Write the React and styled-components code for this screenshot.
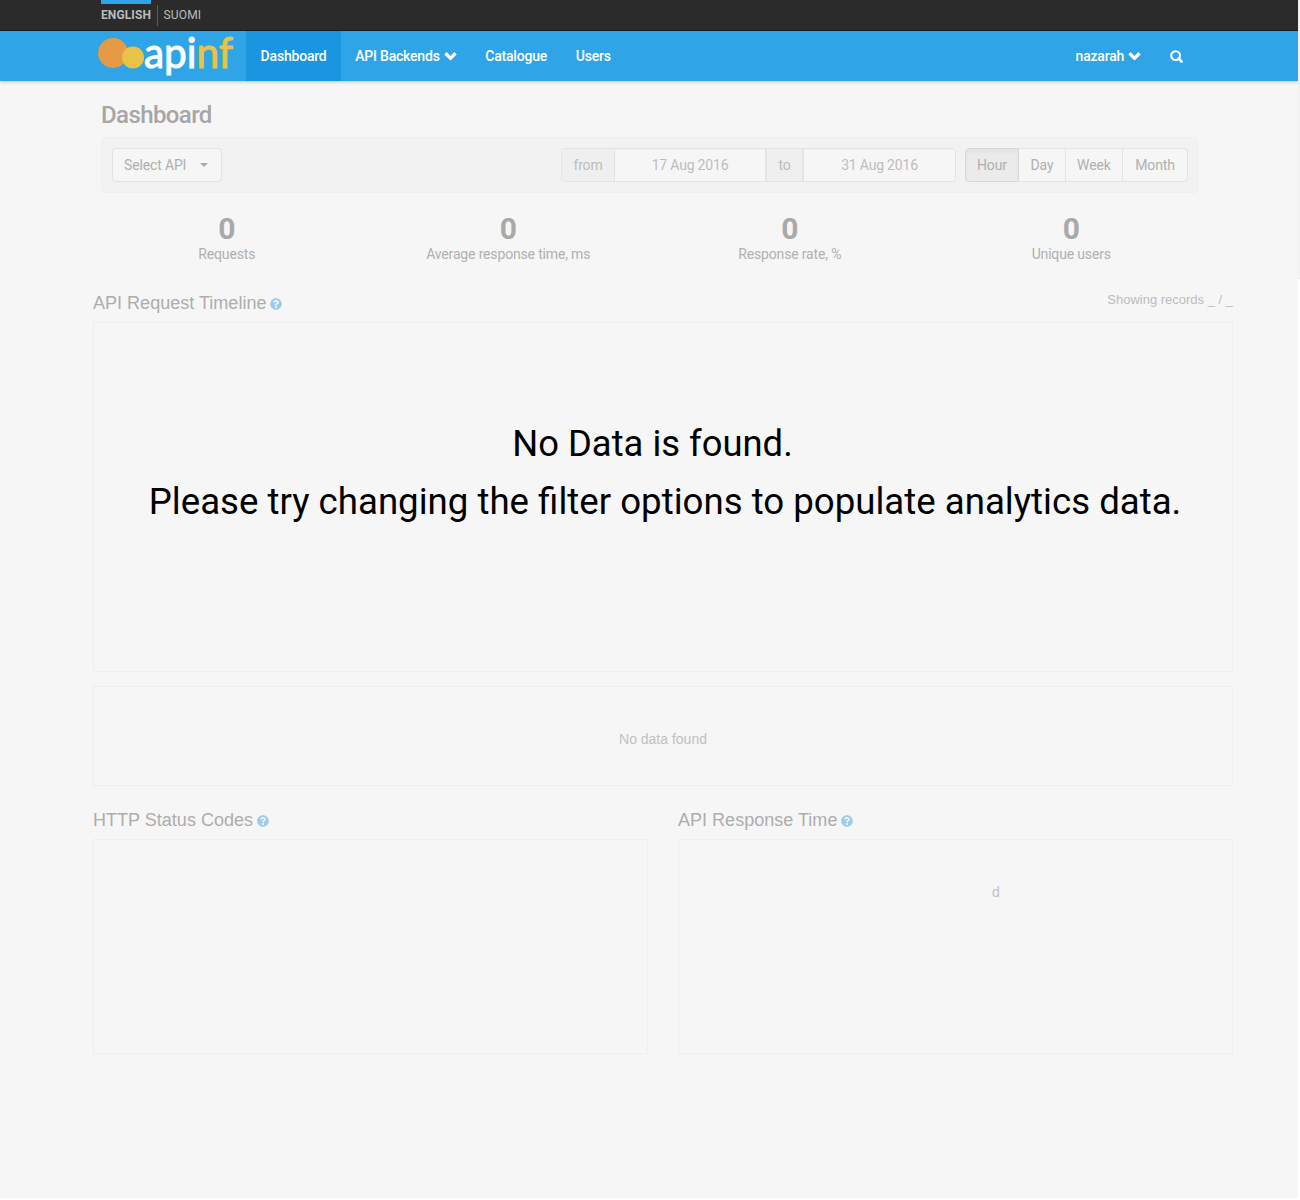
import React from "react";
import styled, { createGlobalStyle, css } from "styled-components";
import { FaQuestionCircle } from "react-icons/fa";

const GlobalStyle = createGlobalStyle`
  * { box-sizing: border-box; }
  body {
    margin: 0;
    background: #fff;
    font-family: Roboto, sans-serif;
    font-size: 14px;
    line-height: 20px;
    color: #b0b0b0;
  }
`;

const Screen = styled.div`
  display: flex;
  align-items: flex-start;
  width: 1300px;
  height: 1200px;
  overflow: hidden;
`;
const Page = styled.div`
  width: 1298px;
  height: 1198px;
  background: #f6f6f6;
`;
const ScrollEdge = styled.div`
  width: 2px;
  height: 279px;
  background: #f1f1f1;
`;

const TopBar = styled.div`
  display: flex;
  height: 31px;
  padding-left: 101px;
  background: #2b2b2b;
  border-bottom: 1px solid #1c1c1c;
  font-size: 12px;
  color: #bbb;
`;
const Language = styled.a`
  height: 30px;
  padding-top: 1px;
  line-height: 20px;
  border-top: 4px solid ${(p) => (p.$active ? "#2fa4e7" : "transparent")};
  font-weight: ${(p) => (p.$active ? 700 : 400)};
  letter-spacing: 0.12px;
`;
const LanguageDivider = styled.span`
  width: 1px;
  height: 21px;
  margin: 5px 5.5px 0 6px;
  background: #5b5b5b;
`;

const NavBar = styled.nav`
  display: flex;
  align-items: stretch;
  height: 50px;
  padding: 0 101px 0 98px;
  background: #2fa4e7;
  box-shadow: 0 1px 3px rgba(0, 0, 0, 0.22);
  color: #fff;
`;
const Brand = styled.a`
  display: block;
  width: 148.3px;
`;
const BrandMark = styled.svg`
  display: block;
  overflow: visible;
`;
const NavItem = styled.a`
  display: flex;
  align-items: center;
  gap: 4px;
  padding: 0 14.3px;
  font-weight: 500;
  letter-spacing: -0.2px;
  ${(p) =>
    p.$active &&
    css`
      background: #1a95e0;
    `}
`;
const NavRight = styled.div`
  display: flex;
  margin-left: auto;
`;

const Main = styled.main`
  padding: 21px 100px 0 101px;
`;
const Title = styled.h1`
  margin: 0;
  height: 35px;
  font-size: 24px;
  font-weight: 500;
  line-height: 26px;
  letter-spacing: -0.6px;
  color: #a6a6a6;
`;
const FilterBar = styled.div`
  display: flex;
  align-items: center;
  height: 56px;
  padding: 0 9px 0 10px;
  background: #f2f2f2;
  border: 1px solid #efefef;
  border-radius: 4px;
`;
const SelectButton = styled.button`
  display: flex;
  align-items: center;
  justify-content: space-between;
  width: 110px;
  height: 34px;
  padding: 0 13px 0 11px;
  font: inherit;
  letter-spacing: -0.15px;
  color: #b0b0b0;
  background: #f6f6f6;
  border: 1px solid #e3e3e3;
  border-radius: 4px;
`;
const Caret = styled.span`
  border: 4px solid transparent;
  border-top-color: #a8a8a8;
  border-bottom: 0;
`;
const DateRange = styled.div`
  display: flex;
  width: 395px;
  height: 34px;
  margin-left: auto;
  overflow: hidden;
  line-height: 32px;
  text-align: center;
  letter-spacing: -0.2px;
  color: #bdbdbd;
  border: 1px solid #e3e3e3;
  border-radius: 4px;
`;
const DateAddon = styled.span`
  width: ${(p) => p.$width};
  background: #efefef;
  border-right: ${(p) => p.$edge || "1px"} solid #e3e3e3;
`;
const DateField = styled.span`
  width: ${(p) => p.$width};
  background: #f6f6f6;
  box-shadow: inset 0 1px 1px rgba(0, 0, 0, 0.02);
  & + ${DateAddon} {
    border-left: 2px solid #e3e3e3;
  }
`;
const Granularity = styled.div`
  display: flex;
  height: 34px;
  margin-left: 9px;
`;
const GranularityButton = styled.button`
  width: ${(p) => p.$width};
  margin-left: -1px;
  padding: 0;
  font: inherit;
  letter-spacing: -0.1px;
  color: #b0b0b0;
  background: #f6f6f6;
  border: 1px solid #e3e3e3;
  &:first-child {
    margin-left: 0;
    border-radius: 4px 0 0 4px;
  }
  &:last-child {
    border-radius: 0 4px 4px 0;
  }
  ${(p) =>
    p.$active &&
    css`
      position: relative;
      background: #ebebeb;
      border-color: #d8d8d8;
      box-shadow: inset 0 3px 5px rgba(0, 0, 0, 0.04);
    `}
`;

const Stats = styled.section`
  display: grid;
  grid-template-columns: repeat(4, 281.5px);
  margin: 19px 0 0 -15px;
  text-align: center;
`;
const StatValue = styled.div`
  height: 32px;
  font-size: 30px;
  font-weight: 700;
  line-height: 33px;
  color: #a9a9a9;
`;
const StatLabel = styled.div`
  letter-spacing: -0.16px;
`;

const Analytics = styled.section`
  width: 1140px;
  margin: 28px 0 0 -8px;
  font-family: "Liberation Sans", Arial, sans-serif;
`;
const PanelHeader = styled.header`
  display: flex;
  justify-content: space-between;
  height: 30px;
`;
const PanelTitle = styled.h2`
  display: flex;
  align-items: center;
  gap: 4px;
  height: 22px;
  margin: 0;
  font-size: 18px;
  font-weight: 400;
  letter-spacing: 0.02px;
  color: #adadad;
`;
const HelpIcon = styled(FaQuestionCircle)`
  width: 12px;
  height: 12px;
  margin-top: 2px;
  color: #99cdeb;
`;
const RecordCount = styled.span`
  margin-top: -2px;
  font-size: 13px;
  color: #bcbcbc;
`;
const Panel = styled.div`
  height: ${(p) => p.$height};
  border: 1px solid #efefef;
`;
const TimelinePanel = styled(Panel)`
  padding-top: 92px;
  text-align: center;
`;
const EmptyMessage = styled.p`
  margin: 0;
  font-family: Roboto, sans-serif;
  font-size: ${(p) => p.$size};
  line-height: 58px;
  white-space: nowrap;
  color: #000;
  padding-right: ${(p) => p.$shift || "0"};
  padding-left: ${(p) => p.$indent || "0"};
`;
const OverviewPanel = styled(Panel)`
  display: flex;
  align-items: center;
  justify-content: center;
  margin-top: 14px;
  padding-top: 6px;
  color: #c1c1c1;
`;
const Columns = styled.div`
  display: grid;
  grid-template-columns: 555px 555px;
  gap: 30px;
  margin-top: 23px;
`;
const ResponsePanel = styled(Panel)`
  padding: 42px 0 0 313px;
  color: #c1c1c1;
`;

function Logo() {
  return (
    <BrandMark width="140" height="50" viewBox="0 0 140 50" fontFamily="Lato, sans-serif" fontSize="42" fontWeight="400">
      <circle cx="15" cy="22" r="15" fill="#e59a45" />
      <circle cx="35" cy="26.5" r="11" fill="#e9c248" />
      <text x="46" y="37" fill="#fff" stroke="#fff" strokeWidth="1" textLength="89" lengthAdjust="spacingAndGlyphs">
        api<tspan fill="#e9c248" stroke="#e9c248">nf</tspan>
      </text>
    </BrandMark>
  );
}

function Chevron() {
  return (
    <svg width="13" height="10" viewBox="0 0 13 10">
      <path d="M2.6 1.1 6.5 4.9 10.4 1.1 12.7 3.4 6.5 9.6 0.3 3.4Z" fill="#fff" />
    </svg>
  );
}

function SearchIcon() {
  return (
    <svg width="13" height="13" viewBox="0 0 13 13" fill="none" stroke="#fff">
      <circle cx="5.6" cy="5.6" r="4.4" strokeWidth="2.1" />
      <path d="M8.8 8.8 11.6 11.6" strokeWidth="2.7" strokeLinecap="round" />
    </svg>
  );
}

const stats = [
  { label: "Requests" },
  { label: "Average response time, ms" },
  { label: "Response rate, %" },
  { label: "Unique users" },
];

export default function App() {
  return (
    <Screen>
      <GlobalStyle />
      <Page>
        <TopBar>
          <Language $active>ENGLISH</Language>
          <LanguageDivider />
          <Language>SUOMI</Language>
        </TopBar>
        <NavBar>
          <Brand><Logo /></Brand>
          <NavItem $active>Dashboard</NavItem>
          <NavItem>API Backends <Chevron /></NavItem>
          <NavItem>Catalogue</NavItem>
          <NavItem>Users</NavItem>
          <NavRight>
            <NavItem>nazarah <Chevron /></NavItem>
            <NavItem><SearchIcon /></NavItem>
          </NavRight>
        </NavBar>
        <Main>
          <Title>Dashboard</Title>
          <FilterBar>
            <SelectButton>Select API <Caret /></SelectButton>
            <DateRange>
              <DateAddon $width="53px">from</DateAddon>
              <DateField $width="150px">17 Aug 2016</DateField>
              <DateAddon $width="39px" $edge="2px">to</DateAddon>
              <DateField $width="151px">31 Aug 2016</DateField>
            </DateRange>
            <Granularity>
              <GranularityButton $active $width="54px">Hour</GranularityButton>
              <GranularityButton $width="48px">Day</GranularityButton>
              <GranularityButton $width="58px">Week</GranularityButton>
              <GranularityButton $width="66px">Month</GranularityButton>
            </Granularity>
          </FilterBar>
          <Stats>
            {stats.map((s) => (
              <div key={s.label}>
                <StatValue>0</StatValue>
                <StatLabel>{s.label}</StatLabel>
              </div>
            ))}
          </Stats>
          <Analytics>
            <PanelHeader>
              <PanelTitle>API Request Timeline <HelpIcon /></PanelTitle>
              <RecordCount>Showing records _ / _</RecordCount>
            </PanelHeader>
            <TimelinePanel $height="350px">
              <EmptyMessage $size="36.4px" $shift="21px">No Data is found.</EmptyMessage>
              <EmptyMessage $size="36.63px" $indent="4px">
                Please try changing the filter options to populate analytics data.
              </EmptyMessage>
            </TimelinePanel>
            <OverviewPanel $height="100px">No data found</OverviewPanel>
            <Columns>
              <div>
                <PanelHeader>
                  <PanelTitle>HTTP Status Codes <HelpIcon /></PanelTitle>
                </PanelHeader>
                <Panel $height="215px" />
              </div>
              <div>
                <PanelHeader>
                  <PanelTitle>API Response Time <HelpIcon /></PanelTitle>
                </PanelHeader>
                <ResponsePanel $height="215px">d</ResponsePanel>
              </div>
            </Columns>
          </Analytics>
        </Main>
      </Page>
      <ScrollEdge />
    </Screen>
  );
}
